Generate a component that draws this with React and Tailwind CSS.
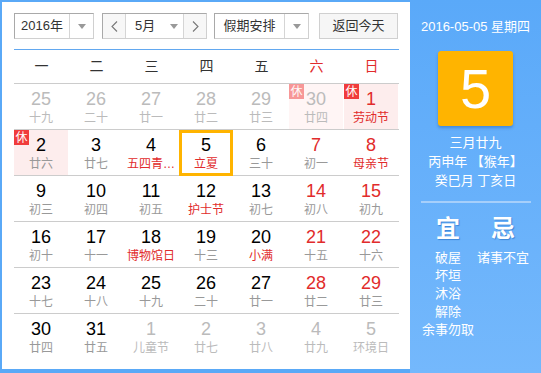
import React from 'react';

const weekDays = ['一', '二', '三', '四', '五', '六', '日'];

// each day: [number, lunar, flags]
// flags: o = other month, r = red number, f = red lunar (festival), h = holiday (休), t = today
const weeks = [
  [['25', '十九', 'o'], ['26', '二十', 'o'], ['27', '廿一', 'o'], ['28', '廿二', 'o'], ['29', '廿三', 'o'], ['30', '廿四', 'oh'], ['1', '劳动节', 'rfh']],
  [['2', '廿六', 'h'], ['3', '廿七', ''], ['4', '五四青…', 'f'], ['5', '立夏', 'ft'], ['6', '三十', ''], ['7', '初一', 'r'], ['8', '母亲节', 'rf']],
  [['9', '初三', ''], ['10', '初四', ''], ['11', '初五', ''], ['12', '护士节', 'f'], ['13', '初七', ''], ['14', '初八', 'r'], ['15', '初九', 'r']],
  [['16', '初十', ''], ['17', '十一', ''], ['18', '博物馆日', 'f'], ['19', '十三', ''], ['20', '小满', 'f'], ['21', '十五', 'r'], ['22', '十六', 'r']],
  [['23', '十七', ''], ['24', '十八', ''], ['25', '十九', ''], ['26', '二十', ''], ['27', '廿一', ''], ['28', '廿二', 'r'], ['29', '廿三', 'r']],
  [['30', '廿四', ''], ['31', '廿五', ''], ['1', '儿童节', 'o'], ['2', '廿七', 'o'], ['3', '廿八', 'o'], ['4', '廿九', 'o'], ['5', '环境日', 'o']],
];

const Caret = () => (
  <svg width="8" height="5" viewBox="0 0 8 5">
    <path d="M0 0h8L4 5z" fill="#999" />
  </svg>
);

const Chevron = ({ dir }) => (
  <svg width="7" height="11" viewBox="0 0 7 11">
    <path d={dir === 'left' ? 'M6 0.5L1 5.5l5 5' : 'M1 0.5l5 5-5 5'} fill="none" stroke="#777" strokeWidth="1.1" />
  </svg>
);

const Select = ({ label, textWidth }) => (
  <div className="flex h-[26px] border border-t-[#a9a9a9] border-l-[#a9a9a9] border-r-[#d0d0d0] border-b-[#d0d0d0] bg-white">
    <div className={`flex items-center justify-center text-[13px] text-[#333] ${textWidth}`}>{label}</div>
    <div className="flex w-[24px] items-center justify-center border-l border-[#d5d5d5]">
      <Caret />
    </div>
  </div>
);

const DayCell = ({ day }) => {
  const [num, lunar, flags] = day;
  const other = flags.includes('o');
  const holiday = flags.includes('h');
  const today = flags.includes('t');

  let numColor = 'text-black';
  if (other) numColor = 'text-[#bbbbbb]';
  else if (flags.includes('r')) numColor = 'text-[#e12b2b]';

  let lunarColor = 'text-[#999999]';
  if (other) lunarColor = 'text-[#bbbbbb]';
  else if (flags.includes('f')) lunarColor = 'text-[#e12b2b]';

  return (
    <div className="relative w-[55px] pr-px">
      <div className={`flex h-[45px] flex-col items-center pt-[4px] ${holiday ? (other ? 'bg-[#fff5f5]' : 'bg-[#fdeded]') : ''}`}>
        <div className={`h-[22px] text-[18px] leading-[22px] ${numColor}`}>{num}</div>
        <div className={`h-[16px] whitespace-nowrap text-[12px] leading-[16px] ${lunarColor}`}>{lunar}</div>
      </div>
      {holiday && (
        <div className={`absolute left-0 top-0 flex h-[15px] w-[15px] items-center justify-center bg-[#f03c3c] text-[12px] leading-none text-white ${other ? 'opacity-50' : ''}`}>
          休
        </div>
      )}
      {today && <div className="absolute left-0 right-px top-0 -bottom-px border-[3px] border-[#ffb400]" />}
    </div>
  );
};

export default function App() {
  return (
    <div className="flex h-[373px] w-[541px] bg-[#5aa9f7] font-['Liberation_Sans','Noto_Sans_CJK_SC',sans-serif]">
      {/* calendar */}
      <div className="ml-[2px] mt-[2px] mb-[4px] w-[408px] bg-white px-[12px] pt-[11px]">
        <div className="flex h-[26px] items-center">
          <Select label="2016年" textWidth="w-[54px]" />
          <div className="ml-[8px] flex h-[26px] border border-t-[#a9a9a9] border-l-[#a9a9a9] border-r-[#d0d0d0] border-b-[#d0d0d0]">
            <div className="flex w-[22px] items-center justify-center bg-[#f7f7f7]">
              <Chevron dir="left" />
            </div>
            <div className="flex w-[59px] items-center border-x border-[#d5d5d5] bg-white pl-[9px]">
              <span className="text-[13px] text-[#333]">5月</span>
              <span className="ml-[15px] flex"><Caret /></span>
            </div>
            <div className="flex w-[22px] items-center justify-center bg-[#f7f7f7]">
              <Chevron dir="right" />
            </div>
          </div>
          <div className="ml-[7px]">
            <Select label="假期安排" textWidth="w-[69px]" />
          </div>
          <button className="ml-[10px] flex h-[26px] w-[82px] items-center justify-center border border-[#d0d0d0] bg-[#f6f6f6] text-[13px] text-[#333]">
            返回今天
          </button>
        </div>

        <div className="mt-[10px] w-[385px]">
          <div className="flex h-[35px] border-y border-t-[#62a8f0] border-b-[#cccccc]">
            {weekDays.map((d, i) => (
              <div
                key={d}
                className={`flex w-[55px] items-center justify-center text-[14px] ${i >= 5 ? 'text-[#e12b2b]' : 'text-[#333]'}`}
              >
                {d}
              </div>
            ))}
          </div>
          {weeks.map((week, wi) => (
            <div key={wi} className={`flex ${wi < weeks.length - 1 ? 'border-b border-[#cccccc]' : ''}`}>
              {week.map((day, di) => (
                <DayCell key={di} day={day} />
              ))}
            </div>
          ))}
        </div>
      </div>

      {/* detail panel */}
      <div className="flex flex-1 flex-col items-center bg-gradient-to-b from-[#5aa9f9] to-[#74b8fc] px-[10px] text-white">
        <div className="mt-[18px] text-[13px] leading-[18px]">2016-05-05 星期四</div>
        <div className="mt-[15px] flex h-[75px] w-[75px] items-center justify-center rounded-[3px] bg-[#ffb400] text-[56px] leading-none shadow-[0_2px_3px_rgba(0,60,140,0.3)]">
          5
        </div>
        <div className="mt-[7px] flex flex-col items-center text-[13px] leading-[19px]">
          <div>三月廿九</div>
          <div>丙申年 【猴年】</div>
          <div>癸巳月 丁亥日</div>
        </div>
        <div className="mt-[11px] h-[2px] w-[110px] bg-[#a6cffb]" />
        <div className="flex w-[110px]">
          <div className="flex w-[55px] flex-col items-center">
            <div className="mt-[12px] text-[24px] font-bold leading-[28px] [text-shadow:1px_1px_1px_#3d86d8]">宜</div>
            <div className="mt-[6px] flex flex-col items-center text-[13px] leading-[18px]">
              <div>破屋</div>
              <div>坏垣</div>
              <div>沐浴</div>
              <div>解除</div>
              <div className="whitespace-nowrap">余事勿取</div>
            </div>
          </div>
          <div className="flex w-[55px] flex-col items-center">
            <div className="mt-[12px] text-[24px] font-bold leading-[28px] [text-shadow:1px_1px_1px_#3d86d8]">忌</div>
            <div className="mt-[6px] flex flex-col items-center text-[13px] leading-[18px]">
              <div className="whitespace-nowrap">诸事不宜</div>
            </div>
          </div>
        </div>
      </div>
    </div>
  );
}
